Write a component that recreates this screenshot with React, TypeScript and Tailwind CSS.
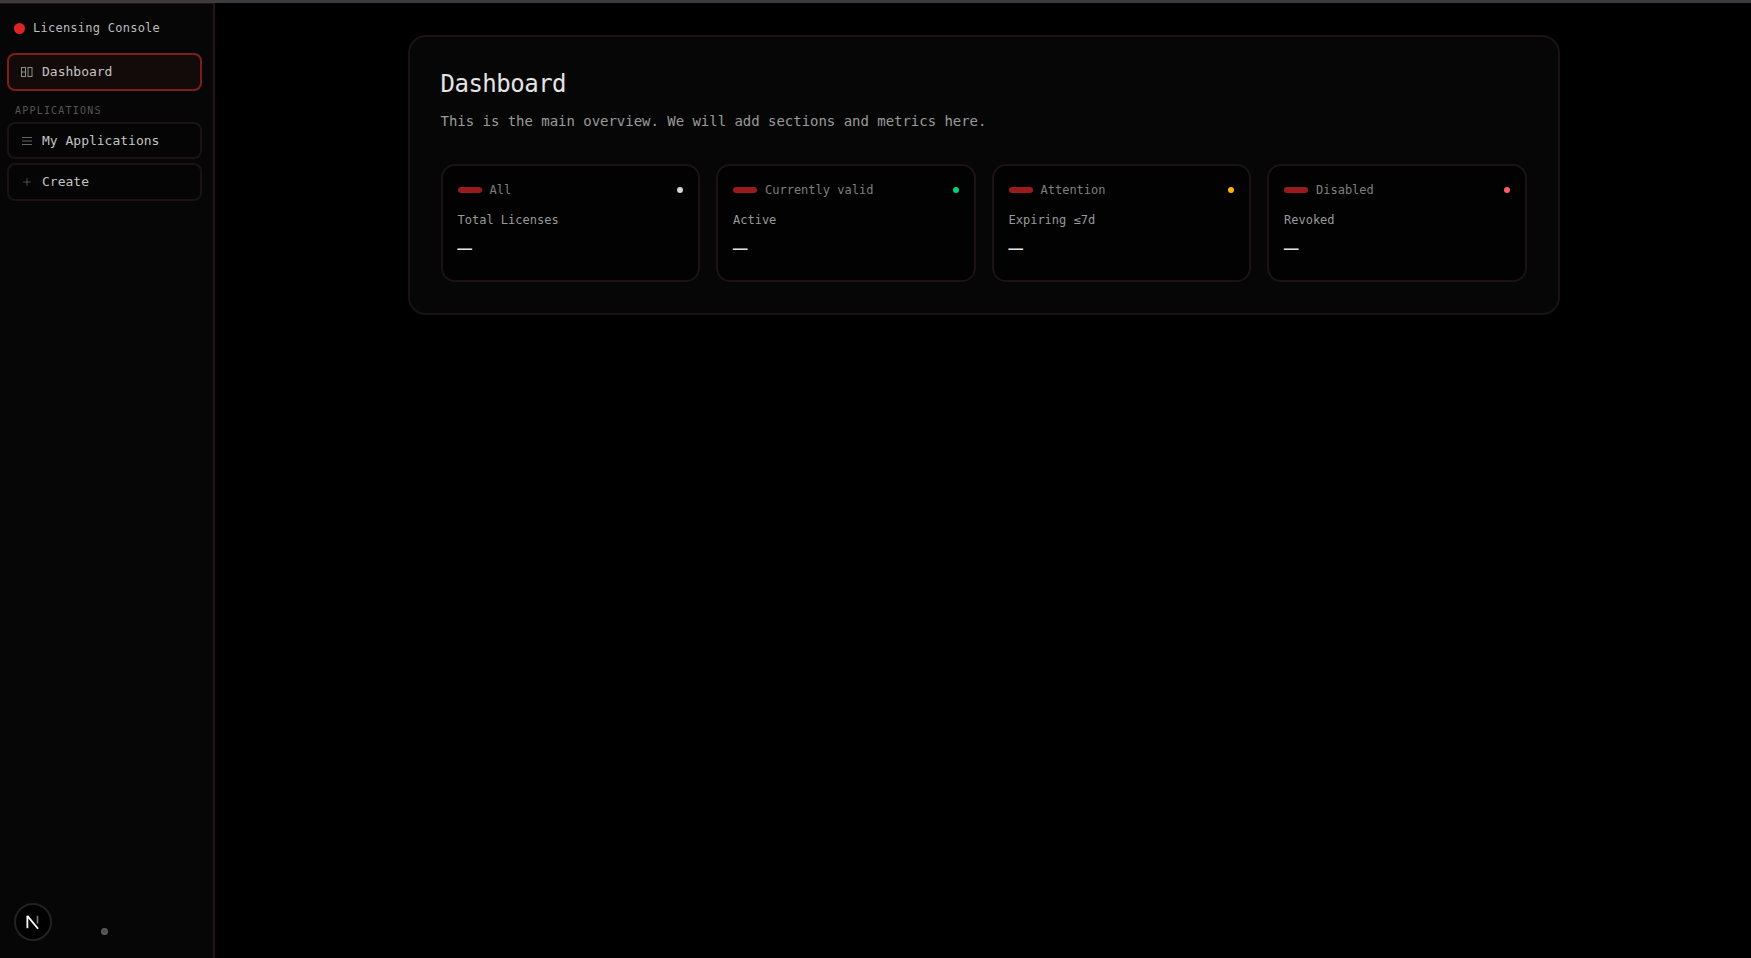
import { Plus } from 'lucide-react';

const mono = { fontFamily: '"DejaVu Sans Mono", "Liberation Mono", monospace' };

const stats = [
  { tag: 'All', label: 'Total Licenses', dot: 'bg-[#d4d4d4]' },
  { tag: 'Currently valid', label: 'Active', dot: 'bg-[#00d47e]' },
  { tag: 'Attention', label: 'Expiring ≤7d', dot: 'bg-[#ffb300]' },
  { tag: 'Disabled', label: 'Revoked', dot: 'bg-[#ff5c63]' },
];

function PanelIcon() {
  return (
    <svg width="12" height="12" viewBox="0 0 12 12" fill="none" stroke="#8f8f8f" strokeWidth="1">
      <rect x="0.5" y="1.5" width="4" height="9" />
      <rect x="7" y="1.5" width="4" height="9" />
      <path d="M0.5 6h4" />
    </svg>
  );
}

function ListIcon() {
  return (
    <svg width="12" height="12" viewBox="0 0 12 12" fill="none" stroke="#6f6f6f" strokeWidth="0.9">
      <path d="M1 2.5h10M1 6h10M1 9.5h10" />
    </svg>
  );
}

export default function App() {
  return (
    <div className="flex flex-col h-[958px] bg-black overflow-hidden" style={mono}>
      <div className="h-[3px] shrink-0 bg-[#3c3c3e]" />
      <div className="flex flex-1 min-h-0">
        <aside className="w-[215px] shrink-0 flex flex-col bg-[#060606] border-r-2 border-t border-[#261416] pl-[7px] pr-[11px]">
          <div className="flex items-center gap-2 pl-[7px] mt-[12px] h-[24px]">
            <span className="w-[11px] h-[11px] rounded-full bg-[#e02424]" />
            <span className="text-[12px] tracking-[0.25px] text-[#bdbdbd]">Licensing Console</span>
          </div>
          <nav className="mt-[13px] flex flex-col">
            <a className="h-[38px] flex items-center gap-[9px] pl-[12px] rounded-lg border-2 border-[#7f1d1d] bg-[#130a0a] text-[13px] text-[#c4c4c4]">
              <PanelIcon />
              Dashboard
            </a>
            <div className="mt-[13px] mb-[4px] pl-[8px] text-[10px] tracking-[1.2px] leading-[14px] text-[#565656]">APPLICATIONS</div>
            <a className="h-[37px] flex items-center gap-[9px] pl-[12px] rounded-lg border-2 border-[#1b1213] bg-[#050505] text-[13px] text-[#c4c4c4]">
              <ListIcon />
              My Applications
            </a>
            <a className="mt-[4px] h-[38px] flex items-center gap-[9px] pl-[12px] rounded-lg border-2 border-[#1b1213] bg-[#050505] text-[13px] text-[#c4c4c4]">
              <Plus size={12} strokeWidth={1.2} color="#7a7a7a" />
              Create
            </a>
          </nav>
          <div className="mt-auto relative h-[56px] mb-[17px]">
            <div className="absolute left-[7px] bottom-0 w-[38px] h-[38px] rounded-full bg-black border-2 border-[#222] flex items-center justify-center">
              <svg width="18" height="18" viewBox="0 0 16 16" fill="none">
                <path d="M3 2.5v11" stroke="#fff" strokeWidth="1.6" />
                <path d="M3 2.5 L12.5 14" stroke="#fff" strokeWidth="1.6" />
                <path d="M12 2.5v7" stroke="#777" strokeWidth="1.4" />
              </svg>
            </div>
            <span className="absolute left-[94px] bottom-[6px] w-[7px] h-[7px] flex items-center justify-center rounded-full bg-[#5c5c5c] text-[5px] leading-[7px] text-[#222]">©</span>
          </div>
        </aside>
        <main className="flex-1 min-w-0 pt-[32px] pl-[1px]">
          <section className="w-[1152px] mx-auto rounded-[18px] border-2 border-[#1b1213] bg-[#060606] p-[31px]">
            <h1 className="text-[24px] leading-[32px] text-[#e4e4e4] tracking-[-0.5px]">Dashboard</h1>
            <p className="mt-[9px] text-[14px] leading-[24px] text-[#9a9a9a] tracking-[-0.03px]">
              This is the main overview. We will add sections and metrics here.
            </p>
            <div className="mt-[31px] grid grid-cols-4 gap-4">
              {stats.map((s) => (
                <div key={s.tag} className="h-[118px] rounded-[14px] border-2 border-[#1b1213] bg-[#020202] px-[15px] pt-[14px]">
                  <div className="flex items-center gap-[8px] h-[20px]">
                    <span className="w-[24px] h-[6px] rounded-full bg-[#991b1b]" />
                    <span className="text-[12px] text-[#7f7f7f]">{s.tag}</span>
                    <span className={`ml-auto w-[6px] h-[6px] rounded-full ${s.dot}`} />
                  </div>
                  <div className="mt-[10px] text-[12px] leading-[20px] text-[#999]">{s.label}</div>
                  <div className="mt-[3px] text-[24px] leading-[32px] text-[#e4e4e4]" style={{ fontFamily: '"Liberation Mono", monospace' }}>—</div>
                </div>
              ))}
            </div>
          </section>
        </main>
      </div>
    </div>
  );
}
